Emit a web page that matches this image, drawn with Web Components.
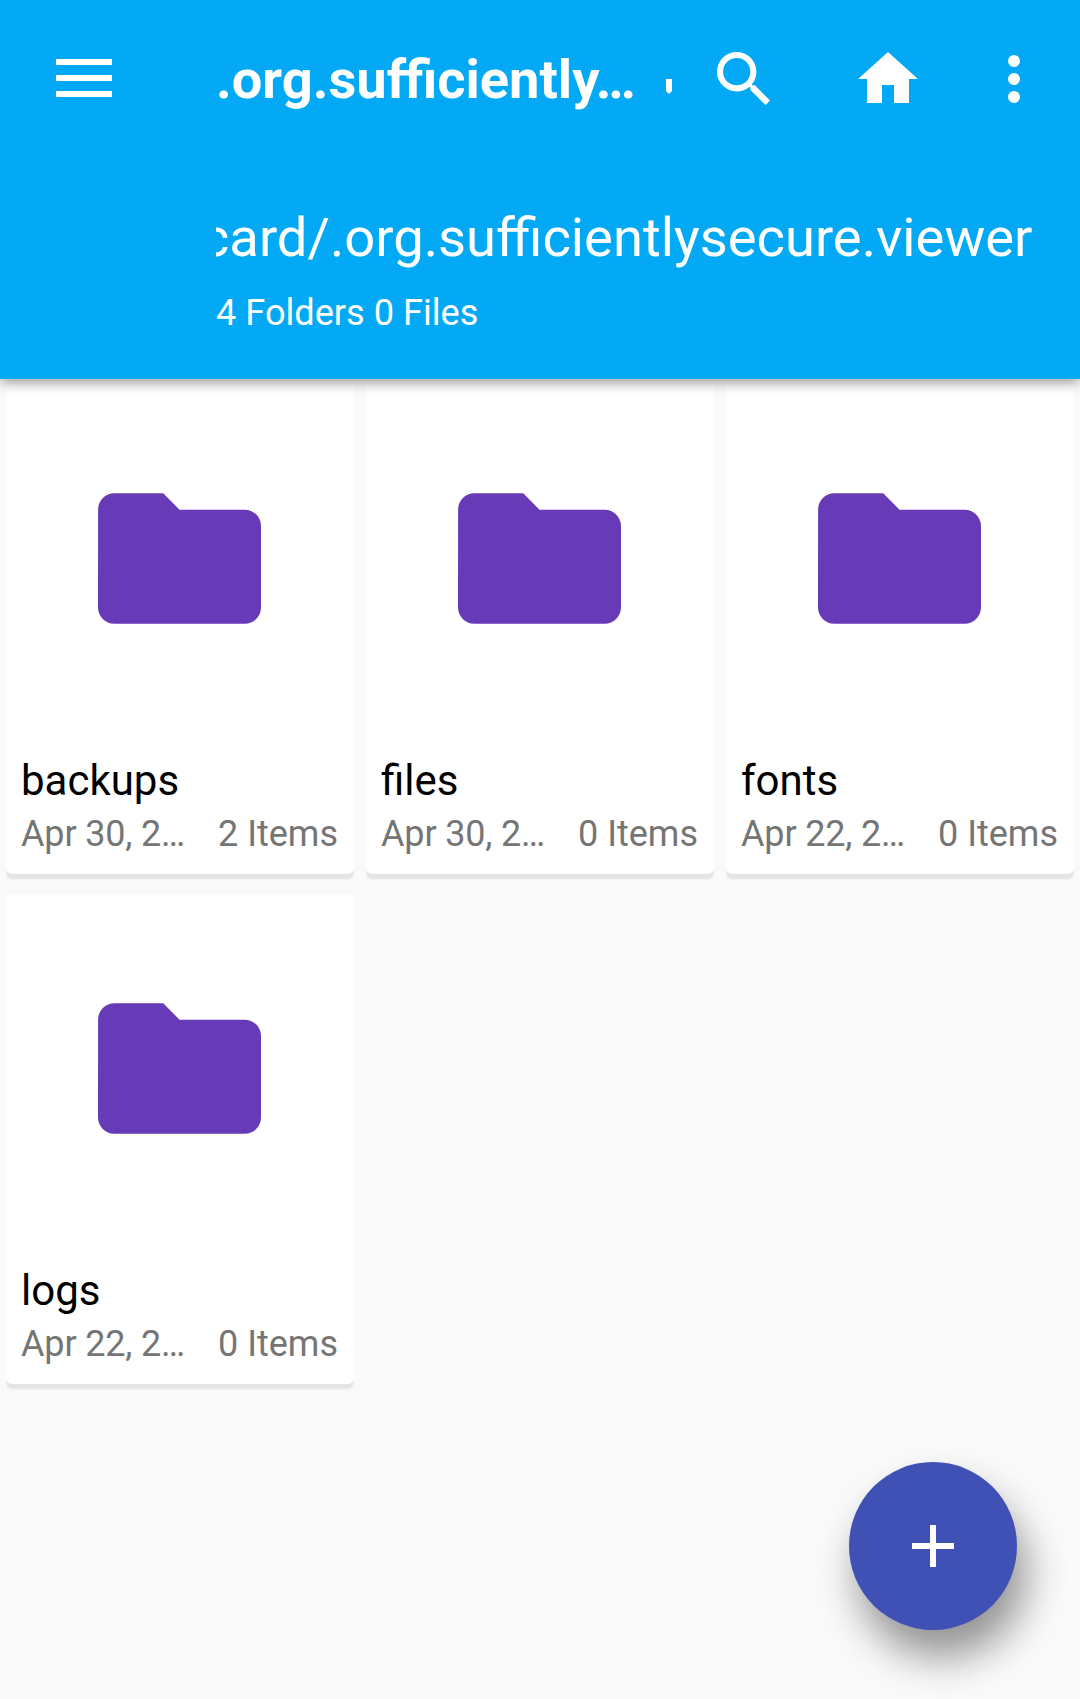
<!DOCTYPE html>
<html lang="en">
<head>
<meta charset="utf-8">
<title>Files</title>
<style>
body{margin:0;background:#fafafa;font-family:Roboto,sans-serif}
</style>
</head>
<body>
<file-manager></file-manager>
<script>
const define=(name,html,setup)=>customElements.define(name,class extends HTMLElement{
  connectedCallback(){
    if(this.shadowRoot)return;
    const t=document.createElement('template');t.innerHTML=html;
    this.attachShadow({mode:'open'}).append(t.content.cloneNode(true));
    if(setup)setup(this);
  }
});
const icons={
  menu:'<svg width="56" height="38" viewBox="0 0 56 38"><path d="M0 0h56v6H0zM0 16h56v6H0zM0 32h56v6H0z"/></svg>',
  search:'<svg width="53" height="53" viewBox="3 3 17.49 17.49"><path d="M15.5 14h-.79l-.28-.27A6.471 6.471 0 0 0 16 9.5 6.5 6.5 0 1 0 9.5 16c1.61 0 3.09-.59 4.23-1.57l.27.28v.79l5 4.99L20.49 19l-4.99-5zm-6 0C7.01 14 5 11.99 5 9.5S7.01 5 9.5 5 14 7.01 14 9.5 11.99 14 9.5 14z"/></svg>',
  home:'<svg width="60" height="51" viewBox="2 3 20 17"><path d="M10 20v-6h4v6h5v-8h3L12 3 2 12h3v8z"/></svg>',
  more:'<svg width="12" height="48" viewBox="0 0 12 48"><circle cx="6" cy="6" r="6"/><circle cx="6" cy="24" r="6"/><circle cx="6" cy="42" r="6"/></svg>',
  folder:'<svg width="163" height="131" viewBox="2 3.96 20 16.07"><path d="M10 4H4c-1.1 0-1.99.9-1.99 2L2 18c0 1.1.9 2 2 2h16c1.1 0 2-.9 2-2V8c0-1.1-.9-2-2-2h-8l-2-2z"/></svg>',
  add:'<svg width="42" height="42" viewBox="0 0 42 42"><path d="M18 0h6v18h18v6H24v18h-6V24H0v-6h18z"/></svg>'
};
define('app-icon','<style>:host{display:block;fill:currentColor}svg{display:block}</style><span></span>',el=>{
  el.shadowRoot.querySelector('span').innerHTML=icons[el.getAttribute('name')];
});
define('app-toolbar',`<style>
:host{display:flex;height:156px;align-items:flex-start;box-sizing:border-box;padding-left:56px}
.menu{margin:59px 104px 0 0}
.title{width:424px;font-size:54.25px;font-weight:700;line-height:64px;margin-top:48px;white-space:nowrap}
.mark{width:6px;height:15px;margin:79px 0 0 26px;background:#fff;clip-path:polygon(0 0,100% 0,100% 80%,50% 100%,0 80%)}
.search{margin:52px 0 0 45px}.home{margin:52px 0 0 88px}.more{margin:55px 0 0 90px}
</style>
<app-icon class="menu" name="menu"></app-icon><div class="title"><slot></slot></div><div class="mark"></div>
<app-icon class="search" name="search"></app-icon><app-icon class="home" name="home"></app-icon><app-icon class="more" name="more"></app-icon>`);
define('path-info',`<style>
:host{display:block;padding:50px 47.5px 0 216px}
.path{display:flex;justify-content:flex-end;overflow:hidden;white-space:nowrap;font-size:54.37px;line-height:64px}
.count{font-size:36.15px;line-height:44px;margin-top:21px}
</style><div class="path"><slot name="path"></slot></div><div class="count"><slot name="count"></slot></div>`);
define('app-header',`<style>
:host{display:block;position:relative;z-index:1;height:379px;background:#03a9f4;color:#fff;box-shadow:0 4px 12px rgba(0,0,0,.36)}
</style><slot></slot>`);
define('folder-card',`<style>
:host{display:flex;flex-direction:column;height:489px;box-sizing:border-box;background:#fff;border-radius:0 0 6px 6px;box-shadow:0 5px 2px #e4e4e4;clip-path:inset(0 0 -9px);padding:0 16px 0 15px}
.pic{display:flex;justify-content:center;padding-top:108px;height:253px;color:#673ab7}
.name{font-size:42px;line-height:50px;color:#000;white-space:nowrap;margin-top:10px}
.info{display:flex;justify-content:space-between;font-size:36px;line-height:44px;color:#757575;white-space:nowrap;margin-top:6px}
.date{letter-spacing:-.16px}
</style><div class="pic"><app-icon name="folder"></app-icon></div>
<div class="name"><slot name="name"></slot></div><div class="info"><div class="date"><slot name="date"></slot></div><slot name="items"></slot></div>`);
define('folder-grid',`<style>
:host{display:grid;grid-template-columns:repeat(3,348px);column-gap:12px;row-gap:21px;padding:6px 6px 0}
</style><slot></slot>`);
define('add-button',`<style>
:host{position:fixed;left:849px;top:1462px;width:168px;height:168px;border-radius:50%;background:#3f51b5;color:#fff;display:flex;align-items:center;justify-content:center;box-shadow:9px 27px 42px rgba(0,0,0,.42)}
</style><app-icon name="add"></app-icon>`);
const card=(n,d,i)=>`<folder-card><span slot="name">${n}</span><span slot="date">${d}</span><span slot="items">${i}</span></folder-card>`;
define('file-manager',`<style>:host{display:block;height:1699px;overflow:hidden}</style>
<app-header><app-toolbar>.org.sufficiently…</app-toolbar>
<path-info><span slot="path">card/.org.sufficientlysecure.viewer</span><span slot="count">4 Folders 0 Files</span></path-info></app-header>
<folder-grid>${card('backups','Apr 30, 2…','2 Items')}${card('files','Apr 30, 2…','0 Items')}${card('fonts','Apr 22, 2…','0 Items')}${card('logs','Apr 22, 2…','0 Items')}</folder-grid>
<add-button></add-button>`);
</script>
</body>
</html>
